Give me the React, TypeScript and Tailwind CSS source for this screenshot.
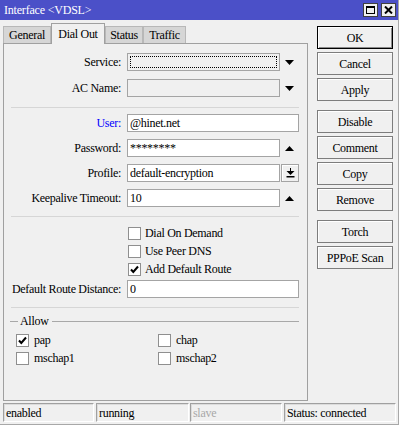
import React from 'react'

const DownTri = () => (
    <svg width="9" height="5" viewBox="0 0 9 5" className="block">
        <polygon points="0,0 9,0 4.5,5" fill="#000" />
    </svg>
)

const UpTri = () => (
    <svg width="9" height="5" viewBox="0 0 9 5" className="block">
        <polygon points="0,5 9,5 4.5,0" fill="#000" />
    </svg>
)

const Check = () => (
    <svg width="11" height="11" viewBox="0 0 11 11" className="block">
        <path d="M2 5.5 L4.3 8 L9 2.5" fill="none" stroke="#000" strokeWidth="2" />
    </svg>
)

const Box = ({ checked }: { checked?: boolean }) => (
    <div className="w-[13px] h-[13px] bg-white border border-[#8f8f8f] flex items-center justify-center shrink-0">
        {checked && <Check />}
    </div>
)

const Label = ({ text, blue }: { text: string; blue?: boolean }) => (
    <div className={`w-[117px] text-right shrink-0 ${blue ? 'text-[#0000ff]' : 'text-black'}`}>{text}</div>
)

const Field = ({
    value,
    width,
    gray,
    focus,
}: {
    value?: string
    width: number
    gray?: boolean
    focus?: boolean
}) => (
    <div
        className={`ml-[6px] h-[18px] border border-[#a4a4a4] px-[2px] flex items-center shrink-0 ${gray ? 'bg-[#f0f0f0]' : 'bg-white'}`}
        style={{ width }}
    >
        {focus ? <div className="w-full h-[12px] border border-dotted border-black" /> : value}
    </div>
)

const Sep = () => <div className="ml-[7px] w-[288px] h-px bg-[#d6d6d6]" />

const Btn = ({ text, primary, className = '' }: { text: string; primary?: boolean; className?: string }) => (
    <div
        className={`w-[76px] h-[23px] flex items-center justify-center bg-[#f0f0f0] border ${
            primary
                ? 'border-black shadow-[inset_1px_1px_0_#fff,inset_-1px_-1px_0_#8a8a8a]'
                : 'border-[#7d7d7d] shadow-[inset_1px_1px_0_#fff]'
        } ${className}`}
    >
        {text}
    </div>
)

const CheckRow = ({ text, checked }: { text: string; checked?: boolean }) => (
    <div className="h-[18px] flex items-center pl-[124px]">
        <Box checked={checked} />
        <span className="ml-[4px]">{text}</span>
    </div>
)

const StatusCell = ({ text, width, className = '', muted }: { text: string; width: number; className?: string; muted?: boolean }) => (
    <div
        className={`h-[19px] border border-t-[#a0a0a0] border-l-[#a0a0a0] border-b-white border-r-white shadow-[inset_1px_1px_0_#dcdcdc] flex items-center pl-[2px] ${muted ? 'text-[#a8a8a8]' : 'text-black'} ${className}`}
        style={{ width }}
    >
        {text}
    </div>
)

export default function App() {
    return (
        <div className="w-[399px] h-[425px] bg-[#f0f0f0] border-r border-b border-[#a8a8a8] flex flex-col [font-family:'Liberation_Serif',serif] text-[12px] tracking-[-0.3px] text-black leading-none overflow-hidden">
            {/* title bar */}
            <div className="h-[20px] bg-[#4b50c8] flex items-center justify-between pl-[4px] pr-[2px] shrink-0">
                <span className="text-white text-[12px] tracking-[-0.2px]">Interface &lt;VDSL&gt;</span>
                <div className="flex gap-[3px]">
                    <div className="w-[15px] h-[14px] bg-[#f0f0f0] border border-[#404040] flex items-center justify-center">
                        <div className="w-[9px] h-[8px] border border-black border-t-2" />
                    </div>
                    <div className="w-[15px] h-[14px] bg-[#f0f0f0] border border-[#404040] flex items-center justify-center">
                        <svg width="9" height="8" viewBox="0 0 9 8">
                            <path d="M1 0.5 L8 7.5 M8 0.5 L1 7.5" stroke="#000" strokeWidth="2" />
                        </svg>
                    </div>
                </div>
            </div>

            <div className="flex shrink-0">
                {/* left: tabs + panel */}
                <div className="pl-[3px] pt-[3px] w-[308px] flex flex-col">
                    <div className="h-[20px] flex items-end">
                        <div className="w-[48px] h-[17px] bg-[#d6d6d6] border border-b-0 border-[#b8b8b8] flex items-center justify-center">General</div>
                        <div className="w-[54px] h-[21px] -mb-px relative z-10 bg-[#f0f0f0] border border-b-0 border-[#a0a0a0] flex items-center justify-center">Dial Out</div>
                        <div className="w-[38px] h-[17px] bg-[#d6d6d6] border border-b-0 border-[#b8b8b8] flex items-center justify-center">Status</div>
                        <div className="w-[43px] h-[17px] bg-[#d6d6d6] border border-b-0 border-[#b8b8b8] flex items-center justify-center">Traffic</div>
                    </div>
                    <div className="h-[358px] border border-[#a0a0a0] flex flex-col">
                        <div className="mt-[9px] flex items-center">
                            <Label text="Service:" />
                            <Field width={153} gray focus />
                            <div className="ml-[5px]"><DownTri /></div>
                        </div>
                        <div className="mt-[8px] flex items-center">
                            <Label text="AC Name:" />
                            <Field width={153} gray />
                            <div className="ml-[5px]"><DownTri /></div>
                        </div>
                        <div className="mt-[10px]"><Sep /></div>
                        <div className="mt-[6px] flex items-center">
                            <Label text="User:" blue />
                            <Field width={172} value="@hinet.net" />
                        </div>
                        <div className="mt-[7px] flex items-center">
                            <Label text="Password:" />
                            <Field width={153} value="********" />
                            <div className="ml-[5px]"><UpTri /></div>
                        </div>
                        <div className="mt-[7px] flex items-center">
                            <Label text="Profile:" />
                            <Field width={153} value="default-encryption" />
                            <div className="ml-px w-[18px] h-[18px] border border-[#a4a4a4] shadow-[inset_1px_1px_0_#fff] flex items-center justify-center">
                                <svg width="9" height="10" viewBox="0 0 9 10" className="block">
                                    <path d="M4.5 0 V4" stroke="#000" strokeWidth="1" />
                                    <polygon points="0.5,3 8.5,3 4.5,7" fill="#000" />
                                    <rect x="0.5" y="8" width="8" height="1.5" fill="#000" />
                                </svg>
                            </div>
                        </div>
                        <div className="mt-[7px] flex items-center">
                            <Label text="Keepalive Timeout:" />
                            <Field width={153} value="10" />
                            <div className="ml-[5px]"><UpTri /></div>
                        </div>
                        <div className="mt-[9px]"><Sep /></div>
                        <div className="mt-[7px] flex flex-col">
                            <CheckRow text="Dial On Demand" />
                            <CheckRow text="Use Peer DNS" />
                            <CheckRow text="Add Default Route" checked />
                        </div>
                        <div className="mt-[2px] flex items-center">
                            <Label text="Default Route Distance:" />
                            <Field width={172} value="0" />
                        </div>
                        <div className="mt-[9px]"><Sep /></div>
                        <div className="mt-[6px] h-[14px] flex items-center">
                            <div className="ml-[6px] w-[8px] h-px bg-[#a8a8a8]" />
                            <span className="ml-[2px]">Allow</span>
                            <div className="ml-[3px] mr-[8px] flex-1 h-px bg-[#a8a8a8]" />
                        </div>
                        <div className="mt-[3px] grid grid-cols-[142px_1fr] pl-[12px]">
                            <div className="h-[18px] flex items-center"><Box checked /><span className="ml-[5px]">pap</span></div>
                            <div className="h-[18px] flex items-center"><Box /><span className="ml-[5px]">chap</span></div>
                            <div className="h-[18px] flex items-center"><Box /><span className="ml-[5px]">mschap1</span></div>
                            <div className="h-[18px] flex items-center"><Box /><span className="ml-[5px]">mschap2</span></div>
                        </div>
                    </div>
                </div>

                {/* right: buttons */}
                <div className="ml-[9px] pt-[6px] flex flex-col gap-[3px]">
                    <Btn text="OK" primary />
                    <Btn text="Cancel" />
                    <Btn text="Apply" />
                    <Btn text="Disable" className="mt-[6px]" />
                    <Btn text="Comment" />
                    <Btn text="Copy" />
                    <Btn text="Remove" />
                    <Btn text="Torch" className="mt-[6px]" />
                    <Btn text="PPPoE Scan" />
                </div>
            </div>

            {/* status bar */}
            <div className="mt-[2px] pl-[3px] flex">
                <StatusCell text="enabled" width={91} />
                <StatusCell text="running" width={93} className="ml-[2px]" />
                <StatusCell text="slave" width={92} className="ml-[1px]" muted />
                <StatusCell text="Status: connected" width={112} className="ml-[2px]" />
            </div>
        </div>
    )
}
